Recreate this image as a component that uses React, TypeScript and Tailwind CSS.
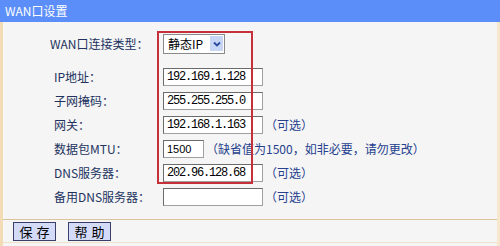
const cjk = "font-['Noto_Sans_CJK_SC','Noto_Sans',sans-serif]";

function Field({ value, wide = true, mono = true }: { value: string; wide?: boolean; mono?: boolean }) {
    return (
        <div
            className={`h-[18px] ${wide ? 'w-[100px]' : 'w-[41px]'} shrink-0 bg-white border border-[#6b6b6b] border-r-[#a0a0a0] border-b-[#a0a0a0] flex items-center pl-[3px] text-black ${mono ? "font-['Liberation_Mono',monospace] text-[12px] tracking-[-1.2px]" : "font-['Liberation_Sans',sans-serif] text-[11px]"}`}
        >
            {value}
        </div>
    )
}

function Row({ label, children }: { label: string; children: React.ReactNode }) {
    return (
        <div className="h-[24px] flex items-center">
            <div className="w-[160px] shrink-0 pl-[51px] whitespace-nowrap text-[12px] text-[#22325e]">{label}</div>
            <div className="flex items-center whitespace-nowrap">{children}</div>
        </div>
    )
}

function Note({ text }: { text: string }) {
    return <span className="ml-[2px] text-[12px] text-[#24408e]">{text}</span>
}

export default function App() {
    return (
        <div className={`w-[500px] h-[246px] bg-[#f5f5f5] ${cjk} leading-none overflow-hidden`}>
            <div className="h-[22px] bg-[#5b8ef8] text-white text-[12px] pl-[5px] flex items-center">
                WAN口设置
            </div>

            <div className="relative border-l-[3px] border-[#f1dcb6] border-r-[3px] border-r-[#f6e6cc] h-[224px]">
                <div className="h-[43px] flex items-center">
                    <div className="w-[160px] shrink-0 pl-[47px] whitespace-nowrap text-[12px] text-[#22325e]">WAN口连接类型：</div>
                    <div className="h-[20px] w-[62px] bg-white border border-[#8a8a8a] flex items-center justify-between pl-[4px] pr-[1px] text-[12px] text-black whitespace-nowrap">
                        静态IP
                        <span className="w-[13px] h-[15px] bg-[#c7d6f5] flex items-center justify-center">
                            <svg width="8" height="6" viewBox="0 0 8 6">
                                <path d="M1 1.5 L4 4.5 L7 1.5" stroke="#2b4aa0" strokeWidth="1.8" fill="none" />
                            </svg>
                        </span>
                    </div>
                </div>

                <Row label="IP地址："><Field value="192.169.1.128" /></Row>
                <Row label="子网掩码："><Field value="255.255.255.0" /></Row>
                <Row label="网关："><Field value="192.168.1.163" /><Note text="（可选）" /></Row>
                <Row label="数据包MTU：">
                    <Field value="1500" wide={false} mono={false} />
                    <Note text="（缺省值为1500，如非必要，请勿更改）" />
                </Row>
                <Row label="DNS服务器："><Field value="202.96.128.68" /><Note text="（可选）" /></Row>
                <Row label="备用DNS服务器："><Field value="" /><Note text="（可选）" /></Row>

                <div className="h-[11px] border-b border-[#dcc49a]" />

                <div className="h-[23px] flex items-center gap-[12px] pl-[10px] pt-[1px] border-b border-[#efe2c8]">
                    <button className="h-[19px] w-[43px] bg-[#d3dbf8] border border-[#3a3f6a] text-[13px] text-black tracking-[4px] pl-[4px]">保存</button>
                    <button className="h-[19px] w-[43px] bg-[#d3dbf8] border border-[#3a3f6a] text-[13px] text-black tracking-[4px] pl-[4px]">帮助</button>
                </div>

                <div className="absolute left-[154px] top-[9px] w-[96px] h-[153px] border-2 border-[#c5303a]" />
            </div>
        </div>
    )
}
